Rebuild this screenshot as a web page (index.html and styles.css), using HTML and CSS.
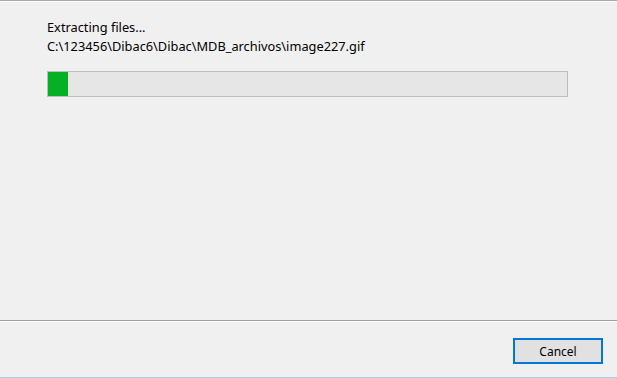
FILE: index.html
```html
<!DOCTYPE html>
<html lang="en">

<head>
    <meta charset="UTF-8">
    <title>Extracting files</title>
    <link rel="stylesheet" href="styles.css">
</head>

<body>

    <div class="dialog">
        <div class="main">
            <div class="status">Extracting files...</div>
            <div class="file">C:\123456\Dibac6\Dibac\MDB_archivos\image227.gif</div>
            <div class="progress">
                <div class="progress-fill" style="width: 20px;"></div>
            </div>
        </div>
        <div class="footer">
            <button class="btn">Cancel</button>
        </div>
    </div>

</body>

</html>
```

FILE: styles.css
```css
/* dialog styles */

body {
    margin: 0;
    padding: 0;
    font-family: "Noto Sans", "Liberation Sans", sans-serif;
    font-size: 12.8px;
    color: #000;
    background: #f0f0f0;
}

.dialog {
    width: 617px;
    height: 378px;
    box-sizing: border-box;
    border-top: 1px solid #a9a9a9;
    border-bottom: 1px solid #a8cbe8;
    display: flex;
    flex-direction: column;
    background: #f0f0f0;
}

.main {
    flex: 1;
    padding: 16px 0 0 47px;
    border-top: 1px solid #ffffff;
}

.status,
.file {
    line-height: 19px;
}

.progress {
    margin-top: 15px;
    width: 521px;
    height: 26px;
    box-sizing: border-box;
    border: 1px solid #bcbcbc;
    background: #e6e6e6;
}

.progress-fill {
    height: 100%;
    background: #06b025;
}

.footer {
    height: 57px;
    border-top: 1px solid #a0a0a0;
    box-shadow: inset 0 1px 0 #ffffff;
    display: flex;
    justify-content: flex-end;
    align-items: flex-start;
    padding: 17px 14px 0 0;
    box-sizing: border-box;
}

.btn {
    width: 90px;
    height: 26px;
    border: 2px solid #0078d7;
    background: #e1e1e1;
    font-family: inherit;
    font-size: 12px;
    color: #000;
    padding: 0;
}
```
